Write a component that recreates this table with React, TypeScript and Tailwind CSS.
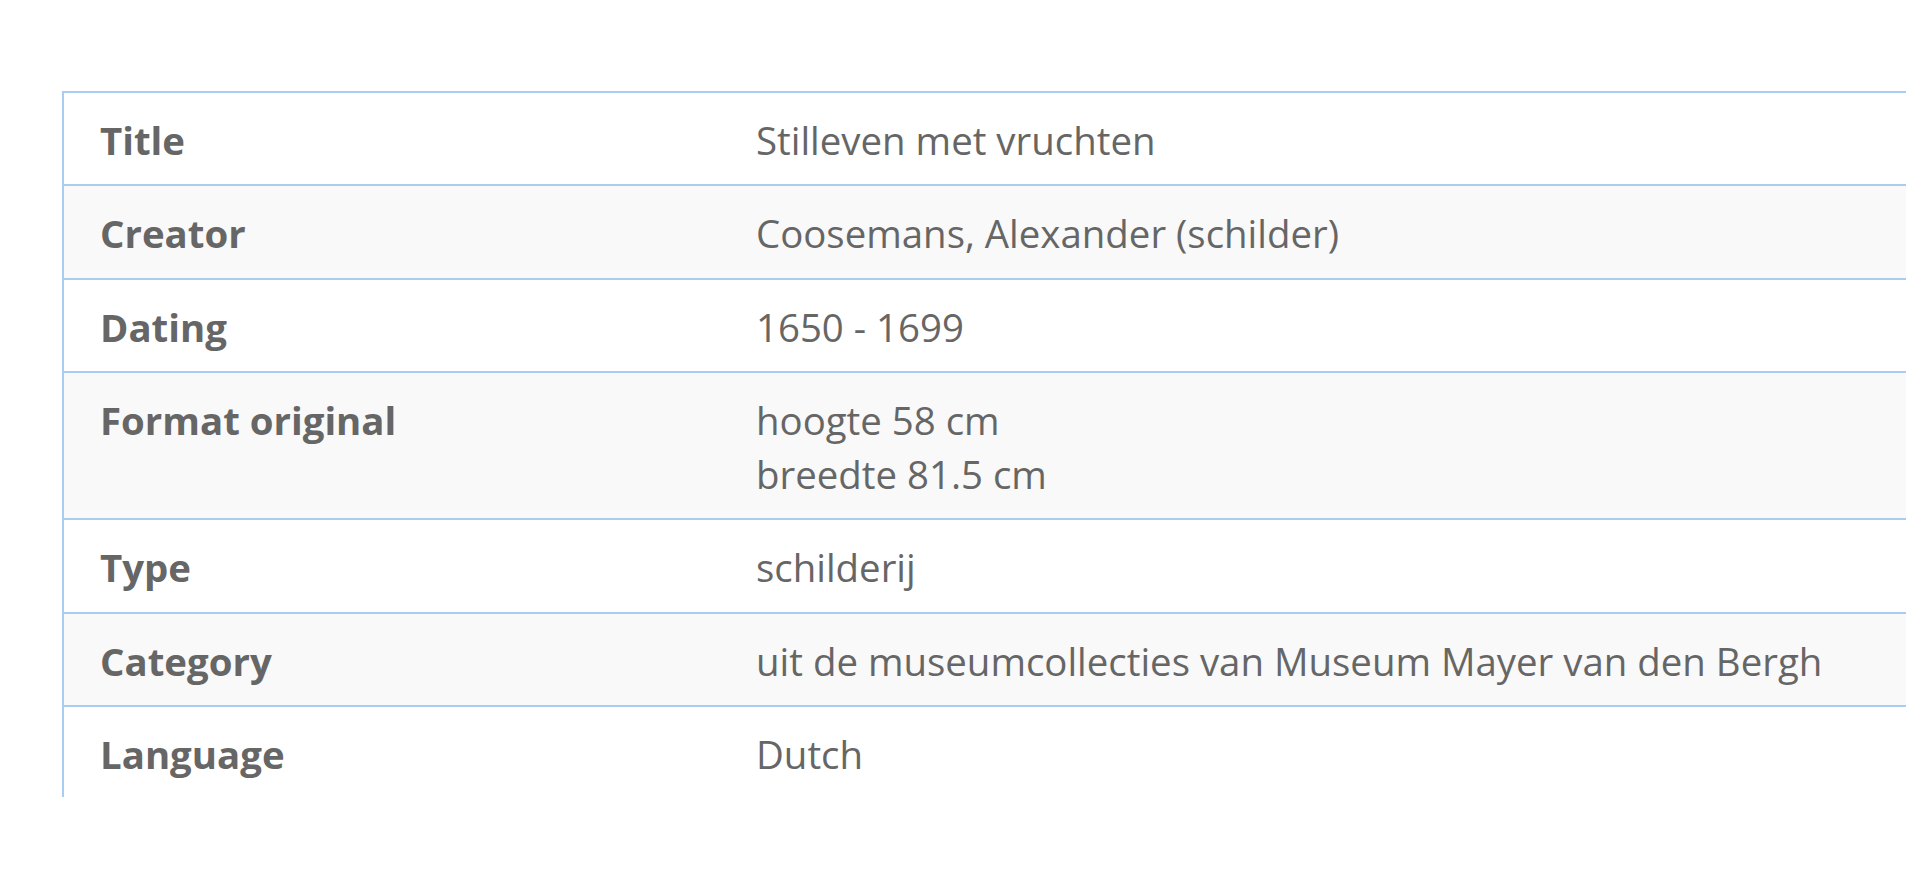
import React from 'react';

export default function App() {
  const rows: { label: string; value: string[] }[] = [
    { label: 'Title', value: ['Stilleven met vruchten'] },
    { label: 'Creator', value: ['Coosemans, Alexander (schilder)'] },
    { label: 'Dating', value: ['1650 - 1699'] },
    { label: 'Format original', value: ['hoogte 58 cm', 'breedte 81.5 cm'] },
    { label: 'Type', value: ['schilderij'] },
    { label: 'Category', value: ['uit de museumcollecties van Museum Mayer van den Bergh'] },
    { label: 'Language', value: ['Dutch'] },
  ];

  return (
    <div className="w-[1906px] h-[884px] bg-white overflow-hidden font-['Open_Sans',sans-serif] text-[#666666]">
      <div className="pt-[91px] pl-[62px]">
        {/* Metadata table, clipped at the bottom as in the capture */}
        <div className="h-[706px] w-[1844px] overflow-hidden border-l-2 border-[#a9cdf0]">
          <div className="w-[2000px] text-[38.4px] leading-[1.4]">
            {rows.map((row, idx) => (
              <div
                key={row.label}
                className={`flex border-t-2 border-[#a9cdf0] ${idx % 2 === 1 ? 'bg-[#f9f9f9]' : 'bg-white'}`}
              >
                <div className="w-[654px] shrink-0 font-bold pl-[36px] pr-[38px] pt-[21px] pb-[16.6px]">
                  {row.label}
                </div>
                <div className="flex-1 font-normal px-[38px] pt-[21px] pb-[16.6px]">
                  {row.value.map((line) => (
                    <div key={line}>{line}</div>
                  ))}
                </div>
              </div>
            ))}
          </div>
        </div>
      </div>
    </div>
  );
}
